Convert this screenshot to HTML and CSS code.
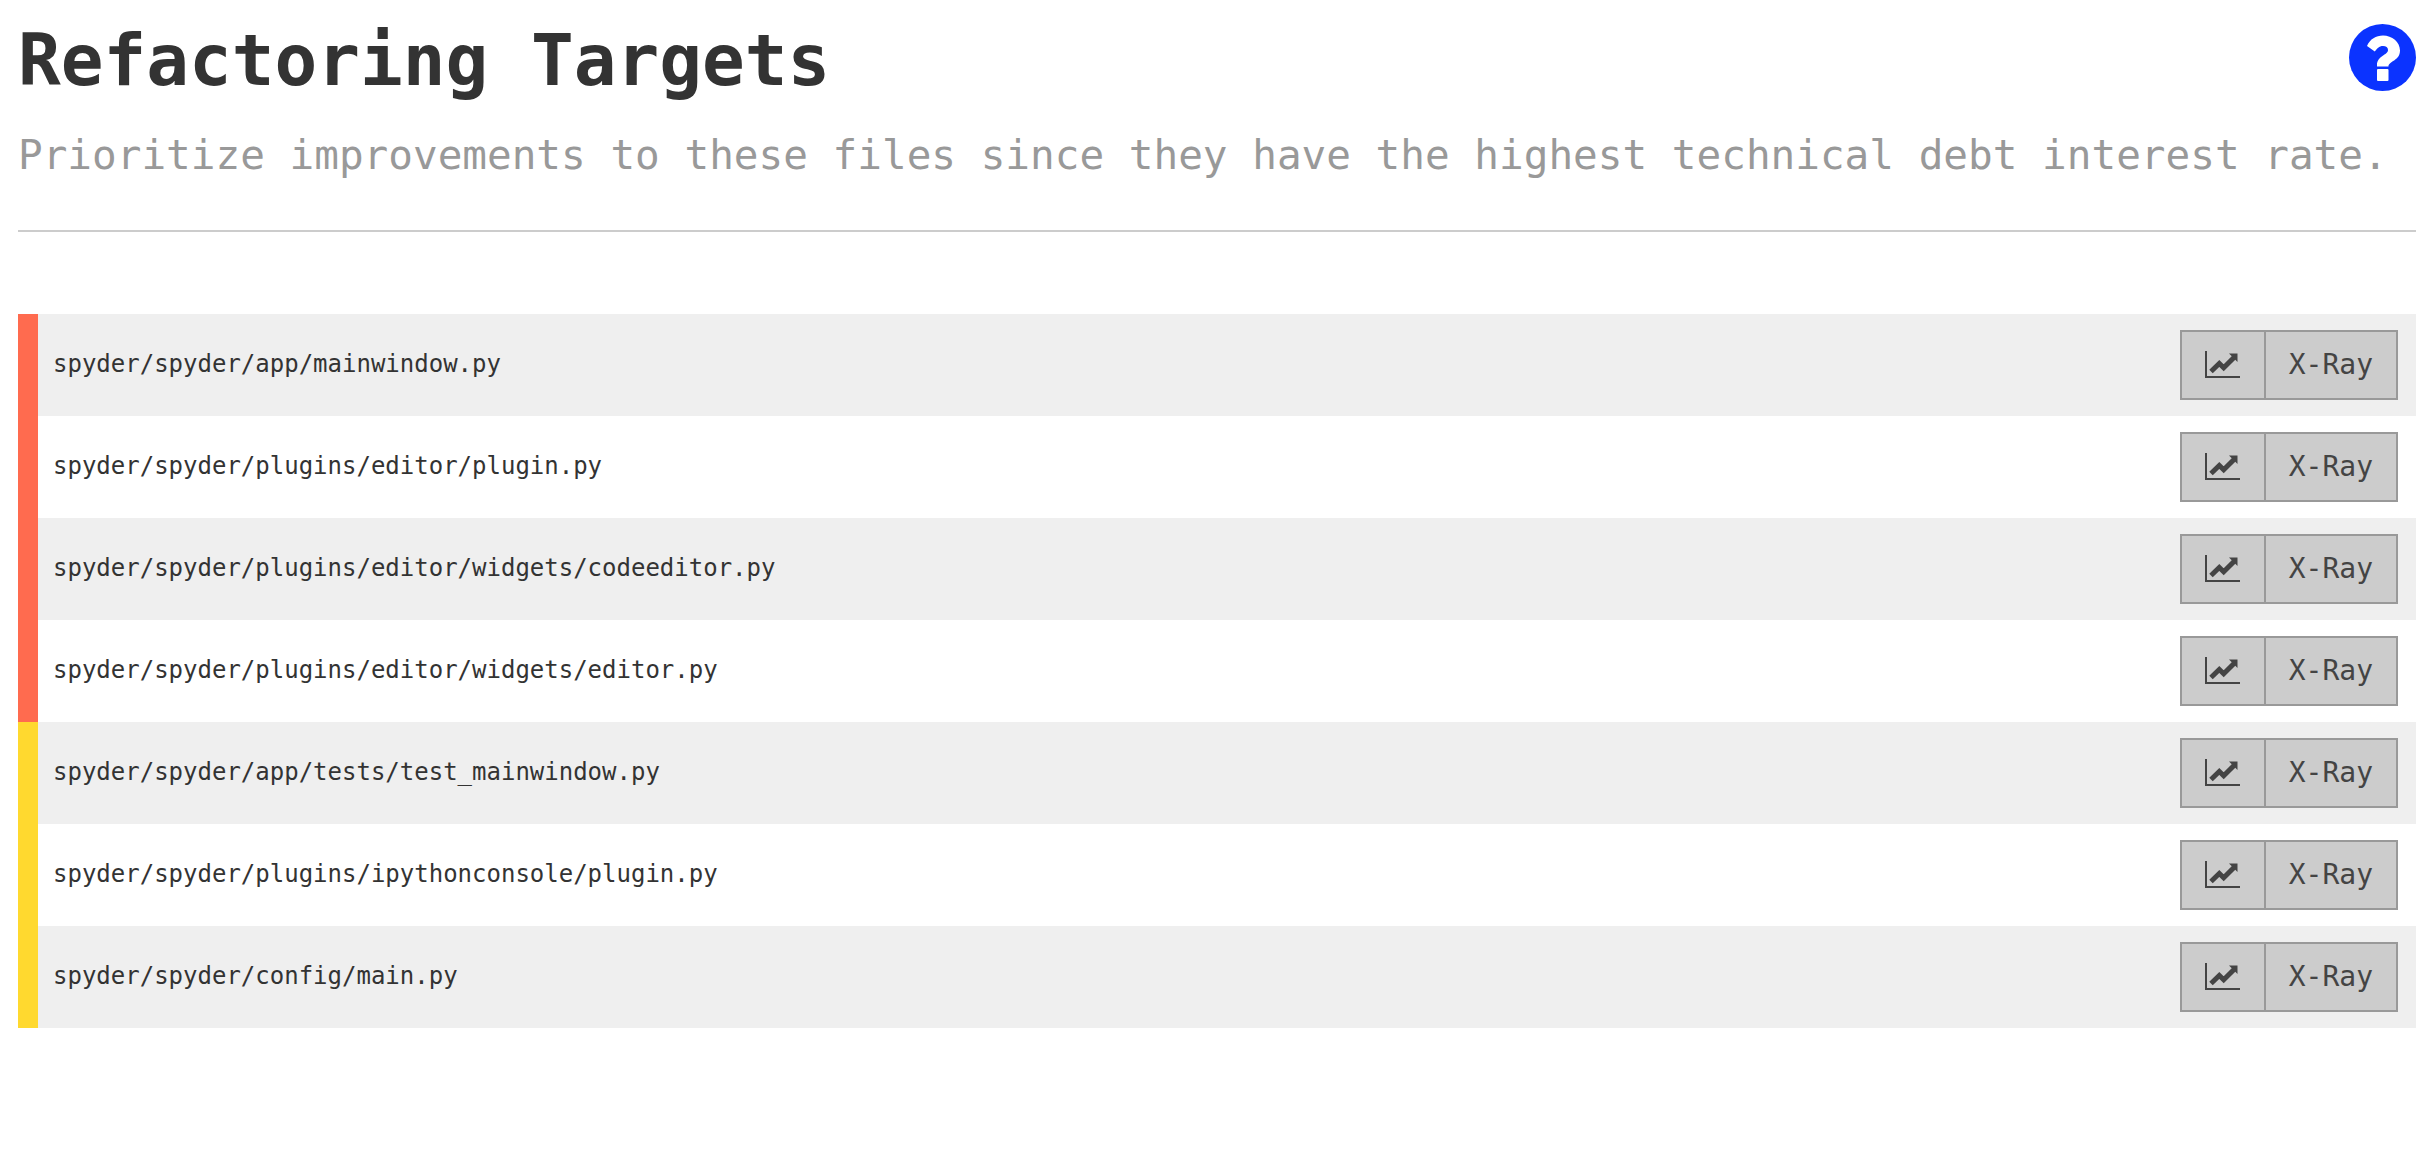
FILE: index.html
```html
<!DOCTYPE html>
<html lang="en">
<head>
<meta charset="utf-8">
<title>Refactoring Targets</title>
<link rel="stylesheet" href="styles.css">
</head>
<body>
<svg class="sprite" aria-hidden="true">
  <symbol id="chart" viewBox="0 0 36 28">
    <path d="M1 0v26h34" fill="none" stroke="currentColor" stroke-width="2"/>
    <path d="M6 20.500L14.300 12.500L18.700 16.800L29 6.500" fill="none" stroke="currentColor" stroke-width="5"/>
    <path d="M24 2.500H32.500V11Z" fill="currentColor"/>
  </symbol>
</svg>
<main class="page">
  <header class="header">
    <div class="title-row">
      <h1 class="title">Refactoring Targets</h1>
      <button class="help" type="button" aria-label="Help">
        <svg class="help-icon" viewBox="0 0 67 67" aria-hidden="true">
          <circle cx="33.500" cy="33.500" r="33.500" fill="#0b33ff"/>
          <path fill="#fff" d="M18 22C21 15 27 11.500 34 11.500C43 11.500 51 18 51 26.500C51 37 39.500 37 39.500 42.500H28V41C28 32 39 31 39 26C39 23.500 37 22 34 22C30 22 28 24.500 25.800 27.600Z"/>
          <rect x="28" y="45" width="11.500" height="12" rx="1" fill="#fff"/>
        </svg>
      </button>
    </div>
    <p class="subtitle">Prioritize improvements to these files since they have the highest technical debt interest rate.</p>
  </header>
  <table class="targets">
    <tbody>
      <tr class="target high"><td class="path">spyder/spyder/app/mainwindow.py</td><td class="actions"><div class="group"><button class="btn trend" type="button" aria-label="Trend"><svg class="chart" aria-hidden="true"><use href="#chart"/></svg></button><button class="btn xray" type="button">X-Ray</button></div></td></tr>
      <tr class="target high"><td class="path">spyder/spyder/plugins/editor/plugin.py</td><td class="actions"><div class="group"><button class="btn trend" type="button" aria-label="Trend"><svg class="chart" aria-hidden="true"><use href="#chart"/></svg></button><button class="btn xray" type="button">X-Ray</button></div></td></tr>
      <tr class="target high"><td class="path">spyder/spyder/plugins/editor/widgets/codeeditor.py</td><td class="actions"><div class="group"><button class="btn trend" type="button" aria-label="Trend"><svg class="chart" aria-hidden="true"><use href="#chart"/></svg></button><button class="btn xray" type="button">X-Ray</button></div></td></tr>
      <tr class="target high"><td class="path">spyder/spyder/plugins/editor/widgets/editor.py</td><td class="actions"><div class="group"><button class="btn trend" type="button" aria-label="Trend"><svg class="chart" aria-hidden="true"><use href="#chart"/></svg></button><button class="btn xray" type="button">X-Ray</button></div></td></tr>
      <tr class="target medium"><td class="path">spyder/spyder/app/tests/test_mainwindow.py</td><td class="actions"><div class="group"><button class="btn trend" type="button" aria-label="Trend"><svg class="chart" aria-hidden="true"><use href="#chart"/></svg></button><button class="btn xray" type="button">X-Ray</button></div></td></tr>
      <tr class="target medium"><td class="path">spyder/spyder/plugins/ipythonconsole/plugin.py</td><td class="actions"><div class="group"><button class="btn trend" type="button" aria-label="Trend"><svg class="chart" aria-hidden="true"><use href="#chart"/></svg></button><button class="btn xray" type="button">X-Ray</button></div></td></tr>
      <tr class="target medium"><td class="path">spyder/spyder/config/main.py</td><td class="actions"><div class="group"><button class="btn trend" type="button" aria-label="Trend"><svg class="chart" aria-hidden="true"><use href="#chart"/></svg></button><button class="btn xray" type="button">X-Ray</button></div></td></tr>
    </tbody>
  </table>
</main>
</body>
</html>
```
FILE: styles.css
```css
* {
  box-sizing: border-box;
}

body {
  margin: 0;
  background: #fff;
  color: #333;
  font-family: "DejaVu Sans Mono", monospace;
}

.sprite {
  display: none;
}

.page {
  padding: 20px 14px 20px 18px;
}

.header {
  padding-bottom: 49px;
  border-bottom: 2px solid #ccc;
}

.title-row {
  display: flex;
  justify-content: space-between;
  align-items: flex-start;
}

.title {
  margin: 0;
  font-size: 71px;
  line-height: 82px;
  font-weight: 700;
}

.help {
  margin: 4px 0 0;
  padding: 0;
  border: 0;
  background: none;
  cursor: pointer;
}

.help-icon {
  display: block;
  width: 67px;
  height: 67px;
}

.subtitle {
  margin: 27px 0 0;
  color: #999;
  font-size: 41px;
  line-height: 52px;
}

.targets {
  width: 100%;
  margin-top: 82px;
  border-collapse: separate;
  border-spacing: 0;
}

.target:nth-child(odd) {
  background: #efefef;
}

.path {
  padding: 0 0 2px 15px;
  border-left: 20px solid;
  font-size: 24px;
  line-height: 32px;
}

.high .path {
  border-left-color: #ff6b4f;
}

.medium .path {
  border-left-color: #ffd92f;
}

.actions {
  padding: 16px 18px 16px 0;
}

.group {
  display: flex;
  justify-content: flex-end;
}

.btn {
  height: 70px;
  border: 2px solid #999;
  background: #ccc;
  color: #444;
  font-family: inherit;
  font-size: 28px;
  line-height: 32px;
  cursor: pointer;
}

.trend {
  padding: 0 23px;
  border-right: 0;
}

.chart {
  display: block;
  width: 36px;
  height: 28px;
}

.xray {
  padding: 0 23px;
}
```
